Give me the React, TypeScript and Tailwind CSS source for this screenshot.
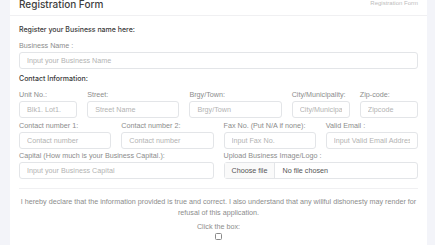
import React from 'react';

const font = { fontFamily: '"Liberation Sans", Arial, sans-serif' };
const heading = { fontFamily: 'Inter, "Liberation Sans", sans-serif' };

const Field = ({ label, placeholder, span }: { label: string; placeholder: string; span: string }) => (
  <div className={span}>
    <label className="block h-[10px] text-[7.2px] leading-[10px] text-[#8c8c8c] whitespace-nowrap mb-px">{label}</label>
    <input
      placeholder={placeholder}
      className="block w-full h-[17px] rounded-[3px] border border-[#e3e5e8] bg-white px-[7px] text-[7.2px] text-[#555] placeholder:text-[#b3b3b3] outline-none"
    />
  </div>
);

export default function App() {
  return (
    <div className="min-h-screen bg-[#f3f4f9] pl-[10px] pr-[8px] overflow-hidden leading-none" style={font}>
      <div className="bg-white h-[245px] overflow-hidden">
        <div className="flex items-start justify-between h-[16px] px-[9px] border-b border-[#f0f0f2]">
          <h1 className="text-[10px] font-medium text-[#3d3d3d] leading-[10px] -mt-[1px]" style={heading}>Registration Form</h1>
          <span className="text-[6px] leading-[7px] text-[#bdbdbd]">Registration Form</span>
        </div>
        <div className="px-[9px] pt-[9px]">
          <p className="text-[7px] leading-[10px] text-[#3a3a3a] font-medium" style={heading}>Register your Business name here:</p>
          <div className="mt-[6px]">
            <Field label="Business Name :" placeholder="Input your Business Name" span="" />
          </div>
          <p className="mt-[5px] text-[7px] leading-[10px] text-[#3a3a3a] font-medium" style={heading}>Contact Information:</p>
          <div className="mt-[6px] grid grid-cols-12 gap-x-[10px] gap-y-[3px]">
            <Field label="Unit No.:" placeholder="Blk1. Lot1." span="col-span-2" />
            <Field label="Street:" placeholder="Street Name" span="col-span-3" />
            <Field label="Brgy/Town:" placeholder="Brgy/Town" span="col-span-3" />
            <Field label="City/Municipality:" placeholder="City/Municipality" span="col-span-2" />
            <Field label="Zip-code:" placeholder="Zipcode" span="col-span-2" />
            <Field label="Contact number 1:" placeholder="Contact number" span="col-span-3" />
            <Field label="Contact number 2:" placeholder="Contact number" span="col-span-3" />
            <Field label="Fax No. (Put N/A if none):" placeholder="Input Fax No." span="col-span-3" />
            <Field label="Valid Email :" placeholder="Input Valid Email Address" span="col-span-3" />
            <div className="col-span-12 -mt-px grid grid-cols-12 gap-x-[10px]">
              <Field label="Capital (How much is your Business Capital.):" placeholder="Input your Business Capital" span="col-span-6" />
              <div className="col-span-6">
                <label className="block h-[10px] text-[7.2px] leading-[10px] text-[#8c8c8c] whitespace-nowrap mb-px">Upload Business Image/Logo :</label>
                <div className="flex h-[17px] rounded-[3px] border border-[#e3e5e8] text-[7.2px] text-[#555] items-stretch">
                  <span className="flex items-center px-[7px] border-r border-[#e3e5e8] bg-[#fafafa]">Choose file</span>
                  <span className="flex items-center px-[7px]">No file chosen</span>
                </div>
              </div>
            </div>
          </div>
          <div className="mt-[9px] border-t border-[#f0f0f2]" />
          <p className="mt-[7px] text-center text-[7.2px] leading-[11px] text-[#8c8c8c]">
            I hereby declare that the information provided is true and correct. I also understand that any willful dishonesty may render for refusal of this application.
          </p>
          <div className="mt-[4px] flex flex-col items-center">
            <span className="text-[7.2px] leading-[10px] text-[#8c8c8c]">Click the box:</span>
            <input type="checkbox" className="block mt-px w-[7px] h-[7px] appearance-none border border-[#8a8a8a] rounded-[1.5px] bg-white" />
          </div>
        </div>
      </div>
    </div>
  );
}
